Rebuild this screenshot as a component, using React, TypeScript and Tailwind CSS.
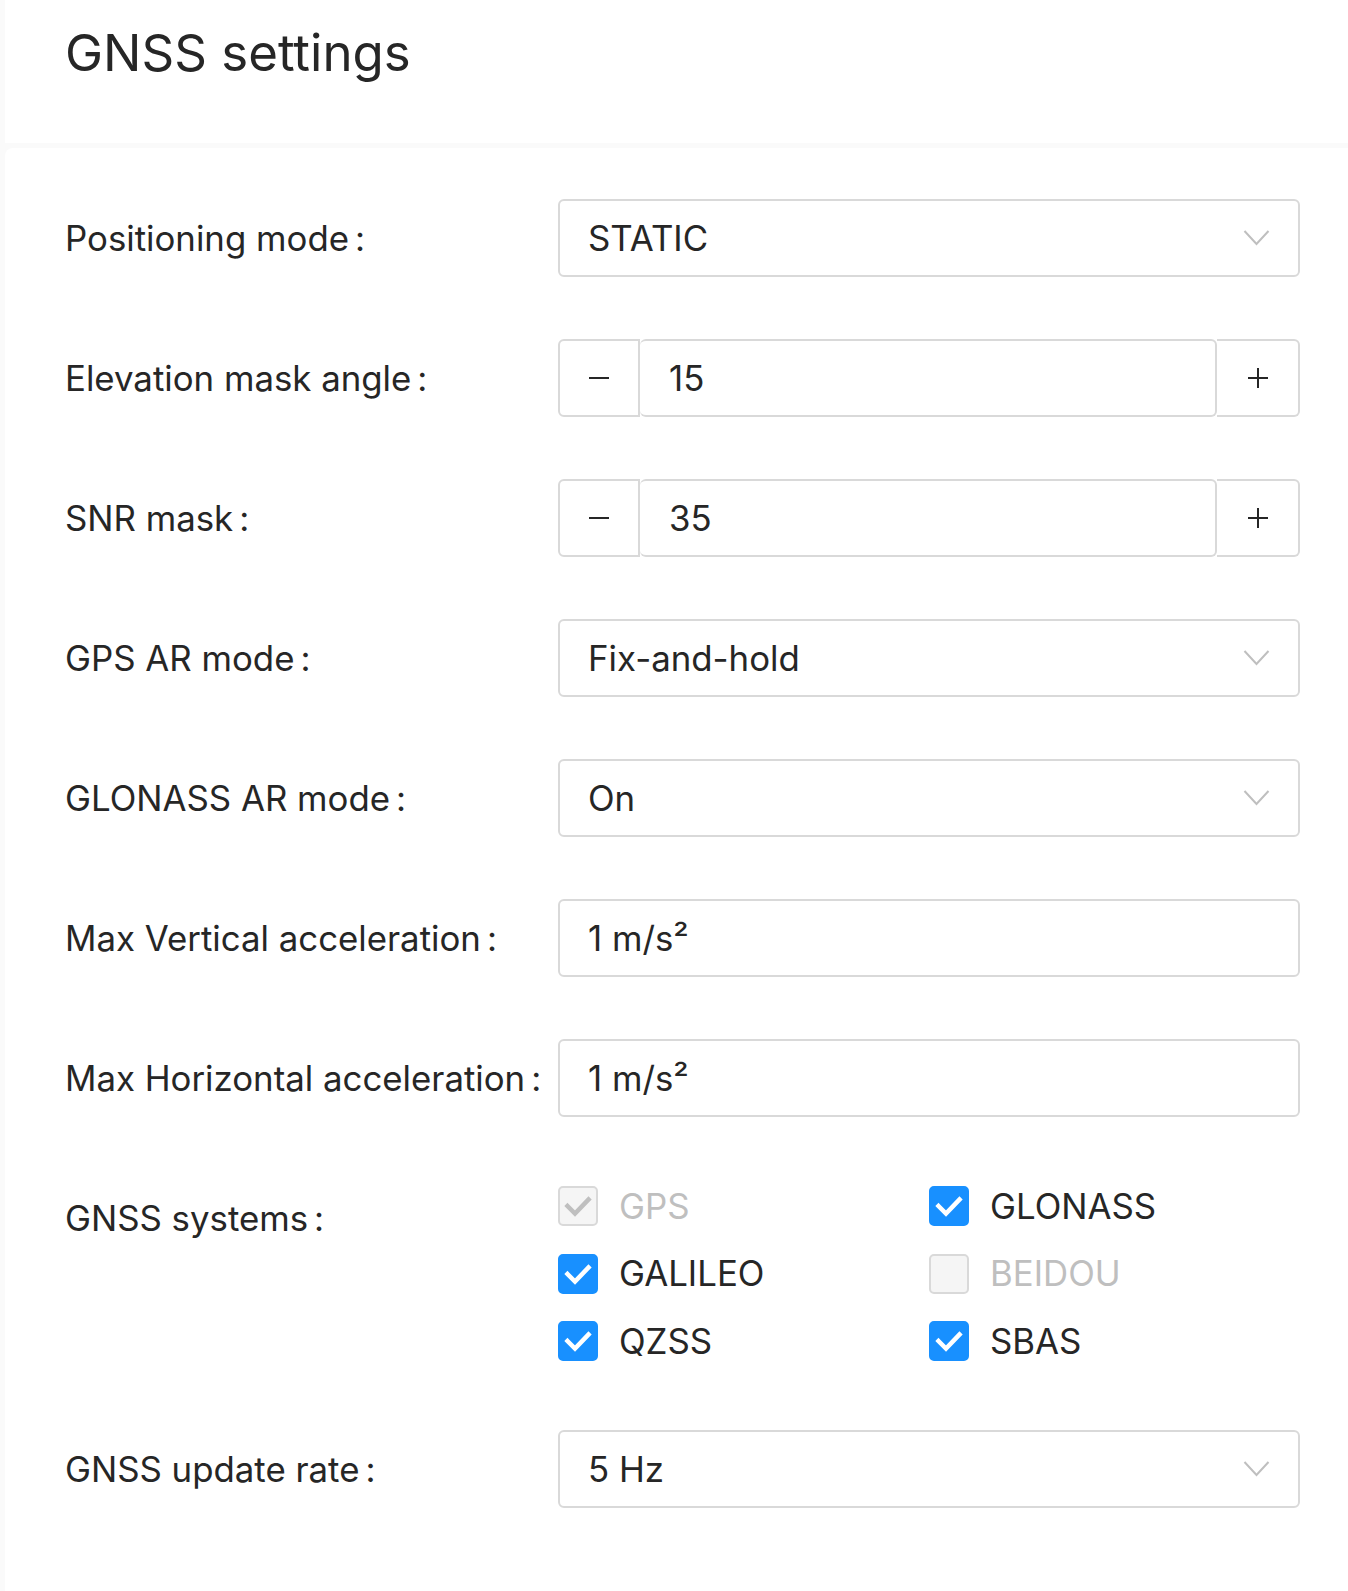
import React from "react";

const font = { fontFamily: "Inter, 'Noto Sans', sans-serif" };

function Chevron() {
  return (
    <svg width="27" height="18" viewBox="0 0 27 18" className="shrink-0">
      <polyline points="1.5,2 13.5,15 25.5,2" fill="none" stroke="#bfbfbf" strokeWidth="2" />
    </svg>
  );
}

function Label({ text }: { text: string }) {
  return (
    <div className="w-[493px] shrink-0 h-[78px] flex items-center text-[34.8px] text-[#262626] whitespace-nowrap">
      <span>{text}</span>
      <span className="ml-[6px] mr-[8px]">:</span>
    </div>
  );
}

function SelectBox({ value }: { value: string }) {
  return (
    <div className="flex-1 h-[78px] border-2 border-[#d9d9d9] rounded-[6px] bg-white flex items-center justify-between pl-[28px] pr-[28px] text-[34.8px] text-[#262626]">
      <span>{value}</span>
      <Chevron />
    </div>
  );
}

function TextBox({ value }: { value: string }) {
  return (
    <div className="flex-1 h-[78px] border-2 border-[#d9d9d9] rounded-[6px] bg-white flex items-center pl-[28px] text-[34.8px] text-[#262626]">
      <span>{value}</span>
    </div>
  );
}

function NumberBox({ value }: { value: string }) {
  return (
    <div className="flex-1 h-[78px] flex text-[34.8px] text-[#262626]">
      <div className="w-[82px] h-full border-2 border-[#d9d9d9] rounded-l-[6px] flex items-center justify-center">
        <div className="w-[20px] h-[2px] bg-[#262626]" />
      </div>
      <div className="flex-1 h-full border-2 border-l-0 border-[#d9d9d9] rounded-[6px] flex items-center pl-[29px]">
        <span>{value}</span>
      </div>
      <div className="w-[83px] h-full border-2 border-l-0 border-[#d9d9d9] rounded-r-[6px] flex items-center justify-center relative">
        <div className="w-[20px] h-[2px] bg-[#262626] absolute" />
        <div className="w-[2px] h-[20px] bg-[#262626] absolute" />
      </div>
    </div>
  );
}

function Check({ label, checked, disabled }: { label: string; checked: boolean; disabled?: boolean }) {
  let box = "bg-[#1890ff] border-[#1890ff]";
  if (disabled) box = "bg-[#f5f5f5] border-[#d9d9d9]";
  const stroke = disabled ? "#bfbfbf" : "#ffffff";
  return (
    <div className="h-[54px] flex items-center">
      <div className={`w-[40px] h-[40px] rounded-[5px] border-2 ${box} flex items-center justify-center shrink-0`}>
        {checked && (
          <svg width="40" height="40" viewBox="0 0 40 40" className="shrink-0">
            <polyline points="9.5,20 17,27.5 30.5,13.5" fill="none" stroke={stroke} strokeWidth="4.5" strokeLinecap="square" />
          </svg>
        )}
      </div>
      <span className={`ml-[21px] text-[34.8px] ${disabled ? "text-[#bfbfbf]" : "text-[#262626]"}`}>{label}</span>
    </div>
  );
}

function Row({ label, children }: { label: string; children: React.ReactNode }) {
  return (
    <div className="flex items-start">
      <Label text={label} />
      {children}
    </div>
  );
}

export default function App() {
  return (
    <div className="w-[1348px] h-[1591px] bg-[#fafafa] flex flex-col pl-[5px] overflow-hidden" style={font}>
      <div className="h-[143px] bg-white shrink-0 pl-[60px] pt-[21px]">
        <h1 className="text-[51px] leading-[64px] text-[#262626] font-normal">GNSS settings</h1>
      </div>
      <div className="flex-1 mt-[5px] bg-white rounded-tl-[8px] pl-[60px] pr-[48px] pt-[51px] flex flex-col gap-[62px]">
        <Row label="Positioning mode">
          <SelectBox value="STATIC" />
        </Row>
        <Row label="Elevation mask angle">
          <NumberBox value="15" />
        </Row>
        <Row label="SNR mask">
          <NumberBox value="35" />
        </Row>
        <Row label="GPS AR mode">
          <SelectBox value="Fix-and-hold" />
        </Row>
        <Row label="GLONASS AR mode">
          <SelectBox value="On" />
        </Row>
        <Row label="Max Vertical acceleration">
          <TextBox value="1 m/s²" />
        </Row>
        <Row label="Max Horizontal acceleration">
          <TextBox value="1 m/s²" />
        </Row>
        <Row label="GNSS systems">
          <div className="flex-1 grid grid-cols-2 gap-y-[13.5px] h-[189px]">
            <Check label="GPS" checked disabled />
            <Check label="GLONASS" checked />
            <Check label="GALILEO" checked />
            <Check label="BEIDOU" checked={false} disabled />
            <Check label="QZSS" checked />
            <Check label="SBAS" checked />
          </div>
        </Row>
        <Row label="GNSS update rate">
          <SelectBox value="5 Hz" />
        </Row>
      </div>
    </div>
  );
}
